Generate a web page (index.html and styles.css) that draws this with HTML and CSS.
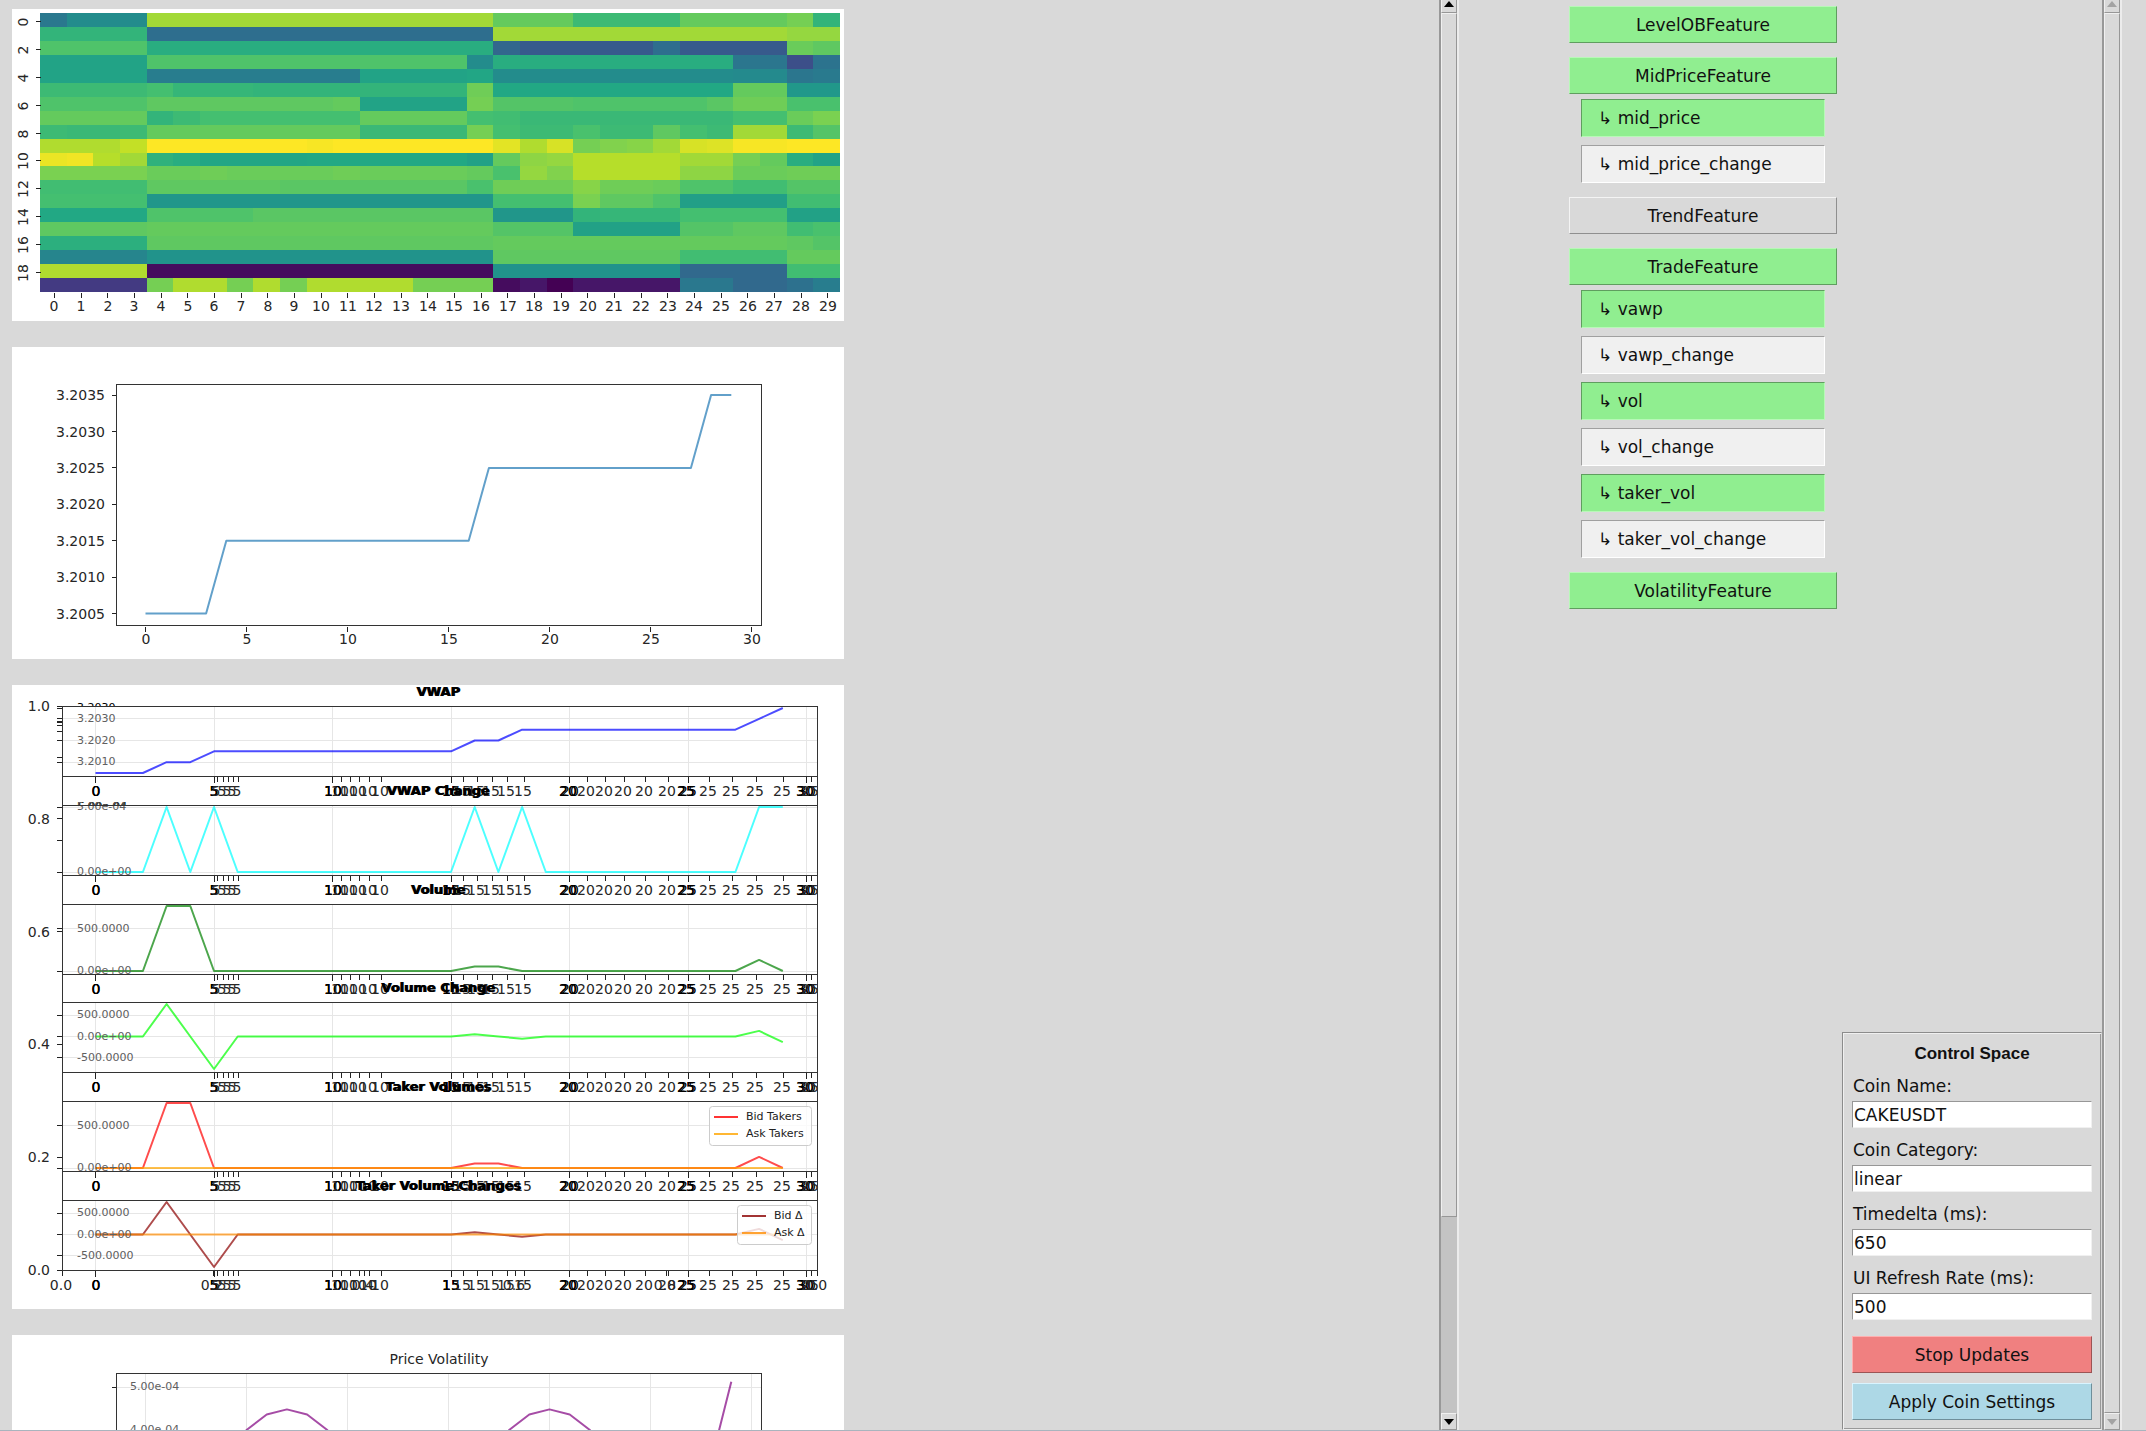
FILE: index.html
```html
<!DOCTYPE html>
<html lang="en">
<head>
<meta charset="utf-8">
<title>Market Features</title>
<link rel="stylesheet" href="styles.css">
</head>
<body>
<div class="app">
  <main class="charts">
    <svg class="figure" id="orderbook" viewBox="0 0 832 312" role="img" aria-label="Order book levels"></svg>
    <svg class="figure" id="midprice" viewBox="0 0 832 312" role="img" aria-label="Mid price"></svg>
    <svg class="figure" id="trades" viewBox="0 0 832 624" role="img" aria-label="Trade features"></svg>
    <svg class="figure" id="volatility" viewBox="0 0 832 312" role="img" aria-label="Price volatility"></svg>
  </main>
  <div class="scrollbar">
    <button class="arrow arrow-up" aria-label="Scroll up"><svg viewBox="0 0 10 6"><path d="M5 0L10 6H0Z"/></svg></button>
    <div class="trough"><div class="thumb thumb-charts"></div></div>
    <button class="arrow" aria-label="Scroll down"><svg viewBox="0 0 10 6"><path d="M0 0H10L5 6Z"/></svg></button>
  </div>
  <section class="features">
    <div class="group"><button class="feature on">LevelOBFeature</button></div>
    <div class="group">
      <button class="feature on">MidPriceFeature</button>
      <div class="subs">
        <button class="sub on">↳ mid_price</button>
        <button class="sub">↳ mid_price_change</button>
      </div>
    </div>
    <div class="group"><button class="feature">TrendFeature</button></div>
    <div class="group">
      <button class="feature on">TradeFeature</button>
      <div class="subs">
        <button class="sub on">↳ vawp</button>
        <button class="sub">↳ vawp_change</button>
        <button class="sub on">↳ vol</button>
        <button class="sub">↳ vol_change</button>
        <button class="sub on">↳ taker_vol</button>
        <button class="sub">↳ taker_vol_change</button>
      </div>
    </div>
    <div class="group"><button class="feature on">VolatilityFeature</button></div>
  </section>
  <aside class="side">
    <form class="control">
      <h2 class="control-title">Control Space</h2>
      <div class="field"><label for="coin">Coin Name:</label><input id="coin" type="text" value="CAKEUSDT"></div>
      <div class="field"><label for="category">Coin Category:</label><input id="category" type="text" value="linear"></div>
      <div class="field"><label for="delta">Timedelta (ms):</label><input id="delta" type="text" value="650"></div>
      <div class="field"><label for="refresh">UI Refresh Rate (ms):</label><input id="refresh" type="text" value="500"></div>
      <div class="actions">
        <button type="button" class="action stop">Stop Updates</button>
        <button type="button" class="action apply">Apply Coin Settings</button>
      </div>
    </form>
  </aside>
  <div class="scrollbar disabled">
    <button class="arrow arrow-up" aria-label="Scroll up" disabled><svg viewBox="0 0 10 6"><path d="M5 0L10 6H0Z"/></svg></button>
    <div class="trough"><div class="thumb"></div></div>
    <button class="arrow" aria-label="Scroll down" disabled><svg viewBox="0 0 10 6"><path d="M0 0H10L5 6Z"/></svg></button>
  </div>
</div>
<script src="charts.js"></script>
</body>
</html>
```
FILE: styles.css
```css
* { box-sizing: border-box; }

body {
  margin: 0;
  background: #d9d9d9;
  color: #111;
  font-family: "DejaVu Sans", sans-serif;
  font-size: 17px;
}

button, input { font: inherit; color: inherit; margin: 0; border-radius: 0; }

.app {
  display: flex;
  height: 100vh;
  overflow: hidden;
  padding-right: 24px;
  border-bottom: 1px solid #a9b4be;
}

/* Figures */
.charts {
  flex: 1;
  min-width: 0;
  overflow: hidden;
  padding: 9px 12px 0;
}

.figure {
  display: block;
  width: 832px;
  max-width: 100%;
  margin-bottom: 26px;
  background: #fff;
}

.figure text { font-size: 14px; fill: #262626; dominant-baseline: central; text-anchor: middle; }
.figure .end { text-anchor: end; }
.figure .small { font-size: 11px; fill: #606060; text-anchor: start; }
.figure .legend-text { font-size: 11px; fill: #222; text-anchor: start; }
.figure .strong { fill: #000; }
.figure .title { font-size: 13px; font-weight: bold; fill: #000; }
.cell, .frame, .tick, .grid { shape-rendering: crispEdges; }
.frame { fill: none; stroke: #333; }
.panel { fill: #fff; }
.tick { stroke: #222; }
.grid { stroke: #e6e6e6; }
.series { fill: none; stroke-width: 2; stroke-linejoin: round; }
.legend-box { fill: #fff; fill-opacity: 0.8; stroke: #ccc; }

/* Scrollbars */
.scrollbar {
  flex: none;
  display: flex;
  flex-direction: column;
  width: 20px;
  border-left: 2px solid #989898;
  border-right: 2px solid #ececec;
  background: #c3c3c3;
}

.trough { flex: 1; }

.thumb, .arrow {
  background: #d9d9d9;
  border: 1px solid;
  border-color: #f0f0f0 #979797 #979797 #f0f0f0;
}

.thumb { height: 100%; }
.thumb-charts { height: 86%; }

.arrow {
  display: flex;
  align-items: center;
  justify-content: center;
  width: 16px;
  height: 17px;
  padding: 0;
}

.arrow-up { height: 13px; border-top: 0; padding-bottom: 4px; }
.arrow svg { width: 10px; height: 6px; fill: #000; }
.disabled .arrow svg { fill: #a3a3a3; }

/* Feature list */
.features {
  flex: none;
  display: flex;
  flex-direction: column;
  gap: 14px;
  width: 383px;
  padding: 6px 5px 0 110px;
}

.feature, .sub, .action {
  display: block;
  width: 100%;
  height: 37px;
  padding: 0;
  background: #d9d9d9;
  border: 1px solid;
  border-color: #f4f4f4 #8f8f8f #8f8f8f #f4f4f4;
}

.feature.on { background: #90ee90; border-color: #b8f8b8 #5f9e5f #5f9e5f #b8f8b8; }

.subs {
  display: flex;
  flex-direction: column;
  gap: 8px;
  padding: 5px 12px 0;
}

.sub {
  height: 38px;
  padding-left: 16px;
  text-align: left;
  background: #f0f0f0;
  border-color: #a0a0a0 #fff #fff #a0a0a0;
}

.sub.on { background: #90ee90; border-color: #5f9e5f #b8f8b8 #b8f8b8 #5f9e5f; }

/* Control panel */
.side {
  flex: none;
  display: flex;
  flex-direction: column;
  justify-content: flex-end;
  width: 260px;
}

.control {
  padding: 9px 9px 9px;
  border: 1px solid;
  border-color: #8c8c8c #d9d9d9 #ededed #8c8c8c;
  box-shadow: inset 1px 1px #f0f0f0, inset -1px -1px #999;
}

.control-title {
  margin: 0 0 7px;
  font: bold 17px/24px "Liberation Sans", sans-serif;
  text-align: center;
}

.field { margin-bottom: 9px; }
.field label { display: block; height: 28px; line-height: 26px; padding-left: 1px; }

.field input {
  display: block;
  width: 100%;
  height: 27px;
  padding: 0 1px;
  background: #fff;
  border: 1px solid;
  border-color: #979797 #f0f0f0 #f0f0f0 #979797;
}

.actions { display: flex; flex-direction: column; gap: 10px; padding-top: 7px; }
.stop { background: #f08080; border-color: #ffb0b0 #9c5454 #9c5454 #ffb0b0; }
.apply { background: #add8e6; border-color: #d8f4ff #6f8f9a #6f8f9a #d8f4ff; }
```
FILE: charts.js
```javascript
const NS = 'http://www.w3.org/2000/svg';

function add(parent, name, attrs, text) {
  const el = document.createElementNS(NS, name);
  for (const key in attrs) el.setAttribute(key, attrs[key]);
  if (text !== undefined) el.textContent = text;
  parent.appendChild(el);
  return el;
}

const line = (svg, cls, x1, y1, x2, y2) => {
  const [a, b, c, d] = [x1, y1, x2, y2].map(v => Math.floor(v) + 0.5);
  add(svg, 'line', { class: cls, x1: a, y1: b, x2: c, y2: d });
};
const label = (svg, cls, x, y, text) =>
  add(svg, 'text', { class: cls, x: Math.round(x), y: Math.round(y) }, text);
const series = (svg, color, ys, toX, toY, opacity = 0.7) =>
  add(svg, 'polyline', {
    class: 'series', stroke: color, 'stroke-opacity': opacity,
    points: ys.map((v, i) => toX(i).toFixed(1) + ',' + toY(v).toFixed(1)).join(' ')
  });

/* Expand [value, count] runs into a flat list. */
const runs = (...pairs) => pairs.flatMap(([v, n]) => Array(n).fill(v));

/* Order book heatmap: each row lists "first column:intensity in percent". */
const viridis = ['440154', '482475', '414487', '355f8d', '2a788e', '21918c', '22a884', '44bf70', '7ad151', 'bddf26', 'fde725']
  .map(h => [0, 2, 4].map(i => parseInt(h.substr(i, 2), 16)));

function colour(p) {
  const i = Math.min(9, Math.floor(p / 10));
  const t = p / 10 - i;
  return 'rgb(' + viridis[i].map((c, k) => Math.round(c + (viridis[i + 1][k] - c) * t)).join(',') + ')';
}

const book = [
  '0:40 1:48 4:86 17:76 20:68 24:76 28:79 29:65',
  '0:65 4:36 17:86 28:84',
  '0:72 4:62 17:33 18:28 23:36 24:28 28:77 29:75',
  '0:58 4:72 16:48 17:62 26:39 28:24 29:38',
  '0:58 4:42 12:58 16:59 17:48 26:47 28:39 29:41',
  '0:68 4:70 5:66 8:65 16:78 17:60 26:76 28:53',
  '0:72 4:75 11:76 12:58 16:79 17:73 20:72 25:74 26:78 28:71',
  '0:76 4:65 5:68 6:70 12:76 16:70 17:69 18:67 26:70 28:77 29:80',
  '0:68 1:67 3:68 4:76 12:67 16:79 17:70 18:68 20:71 21:68 23:75 24:70 25:68 26:86 28:68 29:73',
  '0:88 3:91 4:100 10:99 11:100 17:96 18:88 19:94 20:79 21:81 22:82 23:86 24:94 25:95 26:99 28:100',
  '0:97 1:98 2:89 3:86 4:64 5:62 6:59 10:60 16:57 17:76 18:83 19:84 20:89 24:86 26:79 27:76 28:62 29:58',
  '0:80 4:77 6:78 7:77 11:78 12:77 16:76 17:71 18:84 19:81 20:89 24:83 26:77 28:78',
  '0:69 4:75 9:74 16:71 17:78 20:82 21:78 23:77 24:72 26:69 28:73',
  '0:70 4:52 17:70 20:80 21:75 23:72 24:56 28:69',
  '0:60 4:72 8:74 17:52 20:65 21:66 24:70 28:57',
  '0:75 4:76 17:73 20:57 24:73 26:75 28:69 29:71',
  '0:63 4:75 17:76 28:75 29:73',
  '0:45 4:51 17:75 24:69 28:76',
  '0:88 4:3 17:51 24:34 28:69',
  '0:17 4:79 5:88 7:79 8:88 9:79 10:88 14:79 17:3 18:6 19:0 20:6 24:40 26:34 28:37 29:42'
];

function drawBook(svg) {
  const w = 800 / 30, h = 279 / 20;
  book.forEach((row, r) => {
    const cells = row.split(' ').map(c => c.split(':').map(Number));
    cells.forEach(([start, value], i) => {
      const end = i + 1 < cells.length ? cells[i + 1][0] : 30;
      const x = Math.round(28 + start * w), y = Math.round(4 + r * h);
      add(svg, 'rect', {
        class: 'cell', x, y, fill: colour(value),
        width: Math.round(28 + end * w) - x, height: Math.round(4 + (r + 1) * h) - y
      });
    });
  });
  for (let i = 0; i < 30; i++) {
    const x = 28 + (i + 0.5) * w + 1;
    line(svg, 'tick', x, 283, x, 288);
    label(svg, '', x, 297, i);
  }
  for (let i = 0; i < 20; i += 2) {
    const y = Math.round(4 + (i + 0.5) * h + 1);
    line(svg, 'tick', 23, y, 28, y);
    add(svg, 'text', { x: 11, y: y + 1, transform: `rotate(-90 11 ${y + 1})` }, i);
  }
}

function drawMid(svg) {
  const toX = i => 133.5 + i * 20.2;
  const toY = v => 266.5 - (v - 3.2005) * 72800;
  for (let i = 0; i <= 30; i += 5) {
    line(svg, 'tick', toX(i), 279, toX(i), 284);
    label(svg, '', toX(i), 292, i);
  }
  for (let k = 0; k <= 6; k++) {
    const v = 3.2005 + k * 0.0005;
    line(svg, 'tick', 99, toY(v), 104, toY(v));
    label(svg, 'end', 93, toY(v), v.toFixed(4));
  }
  series(svg, '#1f77b4', runs([3.2005, 4], [3.2015, 13], [3.2025, 11], [3.2035, 2]), toX, toY);
  add(svg, 'rect', { class: 'frame', x: 104.5, y: 37.5, width: 645, height: 241 });
}

const vwap = runs([3.2005, 3], [3.201, 2], [3.2015, 11], [3.202, 2], [3.2025, 10], [3.203, 1], [3.2035, 1]);
const volume = runs([0, 3], [766, 2], [0, 11], [52, 2], [0, 10], [131, 1], [0, 1]);
const diff = a => a.map((v, i) => (i ? v - a[i - 1] : 0));
const none = runs([0, 30]);

const panels = [
  { title: 'VWAP', lo: 3.2005, hi: 3.2035, lines: [['#0000ff', vwap]],
    marks: [[3.203, '3.2030'], [3.202, '3.2020'], [3.201, '3.2010']], hidden: '3.2030' },
  { title: 'VWAP Change', lo: 0, hi: 5, lines: [['#00ffff', diff(vwap).map(v => Math.round(v * 1e4))]],
    marks: [[5, '5.00e-04'], [0, '0.00e+00']], hidden: '5.00e-04' },
  { title: 'Volume', lo: 0, hi: 766, lines: [['#008000', volume]],
    marks: [[500, '500.0000'], [0, '0.00e+00']] },
  { title: 'Volume Change', lo: -766, hi: 766, lines: [['#00ff00', diff(volume)]],
    marks: [[500, '500.0000'], [0, '0.00e+00'], [-500, '-500.0000']] },
  { title: 'Taker Volumes', lo: 0, hi: 766, lines: [['#ff0000', volume], ['#ffa500', none]],
    marks: [[500, '500.0000'], [0, '0.00e+00']], legend: ['Bid Takers', 'Ask Takers'], legendX: 697 },
  { title: 'Taker Volume Changes', lo: -766, hi: 766, lines: [['#8b0000', diff(volume)], ['#ff8c00', none]],
    marks: [[500, '500.0000'], [0, '0.00e+00'], [-500, '-500.0000']], legend: ['Bid Δ', 'Ask Δ'], legendX: 725 }
];

/* Tick positions left behind by earlier layouts of the same axes. */
const stale = {
  5: [205, 211, 216, 221, 226],
  10: [329, 338, 347, 357, 369],
  15: [451, 465, 480, 495, 512],
  20: [575, 593, 612, 633, 656],
  25: [697, 720, 744, 771, 799]
};
const staleY = [23, 36, 37, 40, 46, 72, 155];

function drawTrades(svg) {
  const toX = i => 83.5 + i * 23.7;
  const left = 50, right = 805, top = 21, bottom = 585;

  panels.forEach((p, n) => {
    const y0 = Math.round(top + n * 98.8);
    const toY = v => y0 + 67 - (v - p.lo) / (p.hi - p.lo) * 65;
    if (p.hidden) {
      label(svg, 'small strong', 65, y0 + 1, p.hidden);
      if (n === 1) label(svg, 'small strong', 66, y0 + 1, p.hidden);
    }
    add(svg, 'rect', { class: 'panel', x: left, y: y0, width: right - left, height: 70 });
    for (let i = 0; i <= 30; i += 5) {
      line(svg, 'grid', toX(i), y0, toX(i), y0 + 70);
      line(svg, 'tick', toX(i), y0 + 70, toX(i), y0 + 76);
      for (let k = 0; k < 3; k++) label(svg, 'strong', toX(i) - (i > 15 && k ? 2 : 0), y0 + 85, i);
    }
    for (const value in stale) {
      stale[value].forEach(x => {
        line(svg, 'tick', x, y0 + 70, x, y0 + 75);
        label(svg, '', x - 1, y0 + 85, value);
      });
    }
    p.marks.forEach(([v]) => {
      line(svg, 'grid', left, toY(v), right, toY(v));
      line(svg, 'tick', left - 6, toY(v), left, toY(v));
    });
    p.lines.forEach(([c, ys]) => series(svg, c, ys, toX, toY));
    p.marks.forEach(([v, t]) => label(svg, 'small', 65, toY(v) - 1, t));
    add(svg, 'rect', { class: 'frame', x: left + 0.5, y: y0 + 0.5, width: right - left, height: 70 });
    label(svg, 'title', 427, y0 - 15, p.title);
    label(svg, 'title', 426, y0 - 15, p.title);
    if (p.legend) {
      const x = p.legendX;
      add(svg, 'rect', { class: 'legend-box', x: x + 0.5, y: y0 + 5.5, width: 799 - x, height: 39, rx: 3 });
      p.legend.forEach((t, k) => {
        const y = y0 + 16 + k * 17;
        add(svg, 'line', { class: 'series', stroke: p.lines[k][0], 'stroke-opacity': 0.8, x1: x + 5, y1: y, x2: x + 29, y2: y });
        label(svg, 'legend-text', x + 37, y - 1, t);
      });
    }
  });

  for (let k = 0; k <= 5; k++) {
    const x = left + k * 151, y = bottom - k * 112.8;
    line(svg, 'tick', x, bottom, x, bottom + 5);
    line(svg, 'tick', left - 6, y, left, y);
    label(svg, '', x - 1, 600, (k / 5).toFixed(1));
    label(svg, 'end', 38, y, (k / 5).toFixed(1));
  }
  staleY.forEach(y => line(svg, 'tick', left - 6, y, left, y));
  add(svg, 'rect', { class: 'frame', x: left + 0.5, y: top + 0.5, width: right - left, height: bottom - top });
}

function drawVolatility(svg) {
  const toX = i => 133.5 + i * 20.2;
  const toY = v => 52 + (5 - v) * 43;
  const data = [1.2, 1.2, 1.2, 2.1, 3.1, 4, 4.36, 4.48, 4.36, 4, 3.1, 2.1, 1.2, 1.2, 1.2, 1.2, 2.1, 3.1, 4, 4.36, 4.48, 4.36, 4, 3.1, 2.1, 1.2, 1.2, 1.2, 3.26, 5.12];
  for (let i = 0; i <= 30; i += 5) line(svg, 'grid', toX(i), 38, toX(i), 279);
  for (let v = 5; v >= 1; v--) {
    line(svg, 'grid', 104, toY(v), 749, toY(v));
    line(svg, 'tick', 99, toY(v), 104, toY(v));
    label(svg, 'small', 118, toY(v) - 1, v + '.00e-04');
  }
  series(svg, '#800080', data, toX, toY);
  add(svg, 'rect', { class: 'frame', x: 104.5, y: 38.5, width: 645, height: 241 });
  label(svg, '', 427, 24, 'Price Volatility');
}

drawBook(document.getElementById('orderbook'));
drawMid(document.getElementById('midprice'));
drawTrades(document.getElementById('trades'));
drawVolatility(document.getElementById('volatility'));
```
